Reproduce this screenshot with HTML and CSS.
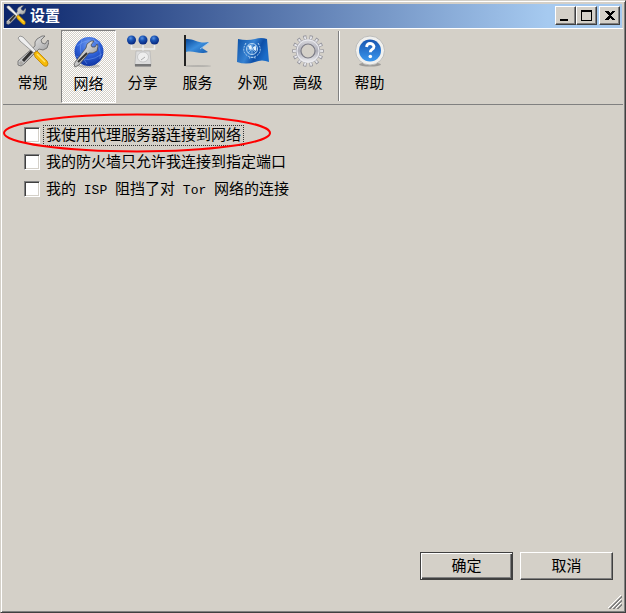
FILE: index.html
```html
<!DOCTYPE html>
<html lang="zh-CN">
<head>
<meta charset="utf-8">
<title>设置</title>
<link rel="stylesheet" href="styles.css">
</head>
<body>
<svg class="defs" aria-hidden="true">
  <defs>
    <linearGradient id="steel" x1="0" y1="0" x2="1" y2="1">
      <stop offset="0" stop-color="#fff"/><stop offset=".5" stop-color="#c4c4c4"/><stop offset="1" stop-color="#777"/>
    </linearGradient>
    <radialGradient id="ball" cx=".4" cy=".3" r=".7">
      <stop offset="0" stop-color="#5c94e4"/><stop offset=".4" stop-color="#1c55b4"/><stop offset="1" stop-color="#06257c"/>
    </radialGradient>
    <radialGradient id="globe" cx=".5" cy=".25" r=".8">
      <stop offset="0" stop-color="#6f9af0"/><stop offset=".5" stop-color="#2c5fd6"/><stop offset="1" stop-color="#0c2f9c"/>
    </radialGradient>
    <linearGradient id="flag" x1="0" y1="0" x2="1" y2="1">
      <stop offset="0" stop-color="#08489a"/><stop offset=".5" stop-color="#3b8ddc"/><stop offset="1" stop-color="#1258ac"/>
    </linearGradient>
    <linearGradient id="cloth" x1="0" y1="0" x2="1" y2=".4">
      <stop offset="0" stop-color="#0b4fa4"/><stop offset=".5" stop-color="#3682d2"/><stop offset=".75" stop-color="#0d4fa8"/><stop offset="1" stop-color="#1b6cc8"/>
    </linearGradient>
    <linearGradient id="gear" x1="0" y1="0" x2="0" y2="1">
      <stop offset="0" stop-color="#d2d2d8"/><stop offset=".5" stop-color="#aeaeb8"/><stop offset="1" stop-color="#e6e6ea"/>
    </linearGradient>
    <linearGradient id="help" x1="0" y1="0" x2="0" y2="1">
      <stop offset="0" stop-color="#1755b0"/><stop offset="1" stop-color="#3b97ee"/>
    </linearGradient>
    <symbol id="tools" viewBox="0 0 32 32">
      <path d="M20 4 25 1l3 0-4 4 1 3 3 1 3-4 1 2-2 6-4 2-4-1L7 29l-3 2-3-1 0-4L18 11l0-4z" fill="url(#steel)" stroke="#666" stroke-width=".8"/>
      <path d="M16 15 6 26" stroke="#333" stroke-width="3"/>
      <circle cx="4" cy="28" r="1.200" fill="#d4d0c8" stroke="#777" stroke-width=".6"/>
      <path d="M1 3 3 1l3 1 13 14-2 2L3 6z" fill="#eee" stroke="#888" stroke-width=".8"/>
      <path d="m17 18 3-2 10 10q2 3 0 5-2 1-4-1l-8-8z" fill="#f6bb08" stroke="#bd8100" stroke-width=".8"/>
      <path d="m20 19 8 8" stroke="#ffe36a" stroke-width="1.500"/>
    </symbol>
  </defs>
</svg>

<main class="window">
  <header class="titlebar">
    <svg class="titlebar-icon" viewBox="0 0 32 32" aria-hidden="true"><use href="#tools"/></svg>
    <h1 class="title">设置</h1>
    <div class="caption-buttons">
      <button class="caption" type="button" aria-label="最小化"><svg viewBox="0 0 16 14"><path d="M2 11h8v2H2z"/></svg></button>
      <button class="caption" type="button" aria-label="最大化"><svg viewBox="0 0 16 14"><path d="M2 2h11v11H2zM3 4v8h9V4z" fill-rule="evenodd"/></svg></button>
      <button class="caption close" type="button" aria-label="关闭"><svg viewBox="0 0 16 14"><path d="M3 3h3l2 2 2-2h3v1L9 7.500 13 11v1h-3L8 10l-2 2H3v-1l4-3.500L3 4z"/></svg></button>
    </div>
  </header>

  <nav class="toolbar">
    <button class="tool" type="button">
      <svg class="icon" viewBox="0 0 32 32" aria-hidden="true"><use href="#tools"/></svg>
      <span>常规</span>
    </button>
    <button class="tool selected" type="button" aria-pressed="true">
      <svg class="icon" viewBox="0 0 32 32" aria-hidden="true">
        <ellipse cx="16" cy="30" rx="11" ry="2" fill="#777" opacity=".4"/>
        <circle cx="16" cy="15.500" r="14.500" fill="url(#globe)"/>
        <path d="M4 10q11-9 22-3M3 20q12 8 26-2M9 4q-5 12 5 24M20 3q9 8 7 20" fill="none" stroke="#8db4f8" stroke-width=".8" opacity=".5"/>
        <path d="m13 12 1-4 4-3 3 0-3 4 1 2 3 0 2-3 1 2-1 5-4 2-4 0L6 29l-4 2-1-3 2-3z" fill="url(#steel)" stroke="#444" stroke-width=".7"/>
        <path d="M14 17 5 26" stroke="#333" stroke-width="2"/>
      </svg>
      <span>网络</span>
    </button>
    <button class="tool" type="button">
      <svg class="icon" viewBox="0 0 32 32" aria-hidden="true">
        <path d="M4.500 9v5h23V9M16 9v8" fill="none" stroke="#eee" stroke-width="1.500"/>
        <path d="M9 16h14l1 12v3H8v-3z" fill="#dcdcdc" stroke="#b4b4b4" stroke-width=".7"/>
        <ellipse cx="16" cy="22" rx="5.500" ry="5" fill="#eee" stroke="#bbb" stroke-width=".7"/>
        <path d="m14 25 4-3" stroke="#aaa"/>
        <path d="M8 29h16v2.500H8z" fill="#777"/>
        <circle cx="4.500" cy="5" r="4.500" fill="url(#ball)"/>
        <circle cx="16" cy="5" r="4.500" fill="url(#ball)"/>
        <circle cx="27.500" cy="5" r="4.500" fill="url(#ball)"/>
      </svg>
      <span>分享</span>
    </button>
    <button class="tool" type="button">
      <svg class="icon" viewBox="0 0 32 32" aria-hidden="true">
        <ellipse cx="16" cy="31" rx="13" ry="1" fill="#888" opacity=".4"/>
        <path d="M4 4c7-1 12 5 23 3l-7 6 6 4c-9 3-14-2-22 0z" fill="url(#flag)"/>
        <path d="M18 14q5-4 9-6" fill="none" stroke="#a8d2f6" stroke-width=".8"/>
        <path d="M3 0v31" stroke="#222" stroke-width="2"/>
      </svg>
      <span>服务</span>
    </button>
    <button class="tool" type="button">
      <svg class="icon" viewBox="0 0 32 32" aria-hidden="true">
        <path d="M1 4q9 2 17 0 6-2 12 0l2 23q-7-3-14 0-9 3-18 0z" fill="url(#cloth)"/>
        <g fill="none" stroke="#b4d4f2">
          <circle cx="15" cy="14" r="5.500"/>
          <path d="M9 14h12M15 8v12M11 10l8 8M19 10l-8 8" stroke-width=".6"/>
          <path d="M9 8q-6 10 4 14l6 1M21 8q6 10-4 14l-5 1" stroke-dasharray="2 1"/>
        </g>
        <path d="m11 11 3-1 1 3-2 2zm5 1 3-1v5l-2-1z" fill="#e3f1fc"/>
      </svg>
      <span>外观</span>
    </button>
    <button class="tool" type="button">
      <svg class="icon" viewBox="0 0 32 32" aria-hidden="true">
        <circle cx="16" cy="16" r="13.300" fill="none" stroke="#94949c" stroke-width="5" stroke-dasharray="14 14" stroke-dashoffset="7" pathLength="392"/>
        <circle cx="16" cy="16" r="13" fill="none" stroke="#e8e8ec" stroke-width="4" stroke-dasharray="8 20" stroke-dashoffset="4" pathLength="392"/>
        <circle cx="16" cy="16" r="9.200" fill="none" stroke="#7c7c86" stroke-width="5.600"/>
        <circle cx="16" cy="16" r="9.800" fill="none" stroke="url(#gear)" stroke-width="4.400"/>
        <circle cx="16" cy="16" r="11" fill="none" stroke="#ececf0"/>
      </svg>
      <span>高级</span>
    </button>
    <span class="separator"></span>
    <button class="tool" type="button">
      <svg class="icon" viewBox="0 0 32 32" aria-hidden="true">
        <ellipse cx="16" cy="29.500" rx="11" ry="2" fill="#777" opacity=".6"/>
        <circle cx="16" cy="15.500" r="14.500" fill="#f0f0ee" stroke="#bdbdbb"/>
        <circle cx="16" cy="15.500" r="11" fill="url(#help)"/>
        <path d="M12.500 12q.5-3.500 3.500-3.500t4 3q0 1.800-2 3-1.700 1-1.700 2.800" fill="none" stroke="#fff" stroke-width="2.800"/>
        <circle cx="16.300" cy="21.500" r="1.800" fill="#fff"/>
      </svg>
      <span>帮助</span>
    </button>
  </nav>

  <form class="settings">
    <div class="options">
      <div class="option focused">
        <input class="check" type="checkbox" id="proxy">
        <label class="option-label" for="proxy">我使用代理服务器连接到网络</label>
        <svg class="highlight" viewBox="0 0 270 40" preserveAspectRatio="none" aria-hidden="true"><ellipse cx="135" cy="20" rx="133" ry="18.500" fill="none" stroke="#f00" stroke-width="2"/></svg>
      </div>
      <div class="option">
        <input class="check" type="checkbox" id="firewall">
        <label class="option-label" for="firewall">我的防火墙只允许我连接到指定端口</label>
      </div>
      <div class="option">
        <input class="check" type="checkbox" id="isp">
        <label class="option-label" for="isp">我的<span class="latin"> ISP </span>阻挡了对<span class="latin"> Tor </span>网络的连接</label>
      </div>
    </div>
    <div class="actions">
      <button class="action default" type="button">确定</button>
      <button class="action" type="button">取消</button>
    </div>
  </form>
  <svg class="grip" viewBox="0 0 14 14" aria-hidden="true">
    <path d="M0 13 13 0M4 13l9-9M8 13l5-5" stroke="#fff"/>
    <path d="M1 14 14 1M2 14 14 2M5 14l9-9M6 14l8-8M9 14l5-5M10 14l4-4" stroke="#808080"/>
  </svg>
</main>
</body>
</html>
```
FILE: styles.css
```css
* { box-sizing: border-box; }

body {
  margin: 0;
  background: #d4d0c8;
  color: #000;
  font: 15px/20px "Noto Sans CJK SC", sans-serif;
}

button { font: inherit; color: inherit; padding: 0; }

.defs { position: absolute; width: 0; height: 0; }

.window {
  position: relative;
  display: flex;
  flex-direction: column;
  min-height: 100vh;
  padding: 2px;
  border: 1px solid;
  border-color: #d4d0c8 #404040 #404040 #d4d0c8;
  box-shadow: inset 1px 1px #fff, inset -1px -1px #808080;
}

.titlebar {
  display: flex;
  align-items: center;
  height: 24px;
  margin: 1px 1px 0;
  padding: 0 2px 2px;
  background: linear-gradient(to right, #0a246a, #a6caf0 88%);
}

.titlebar-icon { width: 20px; height: 20px; margin-right: 4px; }

.title {
  margin: 0;
  color: #fff;
  font-size: 15px;
  font-weight: 700;
  line-height: 20px;
}

.caption-buttons { display: flex; margin-left: auto; }

.caption {
  display: flex;
  align-items: center;
  justify-content: center;
  width: 21px;
  height: 19px;
  background: #d4d0c8;
  border: 1px solid;
  border-color: #fff #404040 #404040 #fff;
  box-shadow: inset -1px -1px #808080;
}

.caption svg { width: 16px; height: 14px; shape-rendering: crispEdges; }
.close { margin-left: 2px; }

.toolbar {
  display: flex;
  height: 77px;
  padding: 1px 3px;
  border-top: 1px solid #fff;
  border-bottom: 1px solid #808080;
}

.tool {
  display: flex;
  flex-direction: column;
  align-items: center;
  gap: 5px;
  width: 55px;
  height: 73px;
  padding: 4px 2px 0 0;
  background: none;
  border: 1px solid transparent;
}

.selected {
  padding: 5px 0 0;
  background: repeating-conic-gradient(#fff 0 25%, #d4d0c8 0 50%) 0 0 / 2px 2px;
  border-color: #808080 #fff #fff #808080;
}

.icon { width: 32px; height: 32px; flex: none; }

.separator {
  width: 2px;
  height: 70px;
  margin: 1px 3px 0 2px;
  border-left: 1px solid #808080;
  border-right: 1px solid #fff;
}

.settings {
  flex: 1;
  display: flex;
  flex-direction: column;
  padding: 20px 10px 30px 21px;
}

.options {
  display: flex;
  flex-direction: column;
  align-items: flex-start;
  gap: 6px;
}

.option {
  position: relative;
  display: flex;
  align-items: flex-start;
  gap: 3px;
}

.check {
  appearance: none;
  width: 16px;
  height: 16px;
  margin: 2px 0 0;
  background: #fff;
  border: 1px solid;
  border-color: #808080 #fff #fff #808080;
  box-shadow: inset 1px 1px #404040, inset -1px -1px #d4d0c8;
}

.option-label {
  height: 21px;
  padding: 0 2px;
  border: 1px solid transparent;
  line-height: 16px;
  white-space: pre;
}

.focused .option-label { border: 1px dotted #333; }

.latin { font: 13px/16px "Liberation Mono", monospace; }

/* Ring drawn over the first option */
.highlight {
  position: absolute;
  top: -12px;
  left: -22px;
  width: calc(100% + 50px);
  height: 40px;
  pointer-events: none;
}

.actions {
  display: flex;
  justify-content: flex-end;
  gap: 7px;
  margin-top: auto;
}

.action {
  width: 93px;
  height: 28px;
  padding-bottom: 2px;
  background: #d4d0c8;
  border: 1px solid;
  border-color: #fff #404040 #404040 #fff;
  box-shadow: inset -1px -1px #808080;
}

.default {
  border-color: #404040;
  box-shadow: inset 1px 1px #fff, inset -1px -1px #404040, inset -2px -2px #808080;
}

.grip {
  position: absolute;
  right: 3px;
  bottom: 3px;
  width: 14px;
  height: 14px;
}
```
